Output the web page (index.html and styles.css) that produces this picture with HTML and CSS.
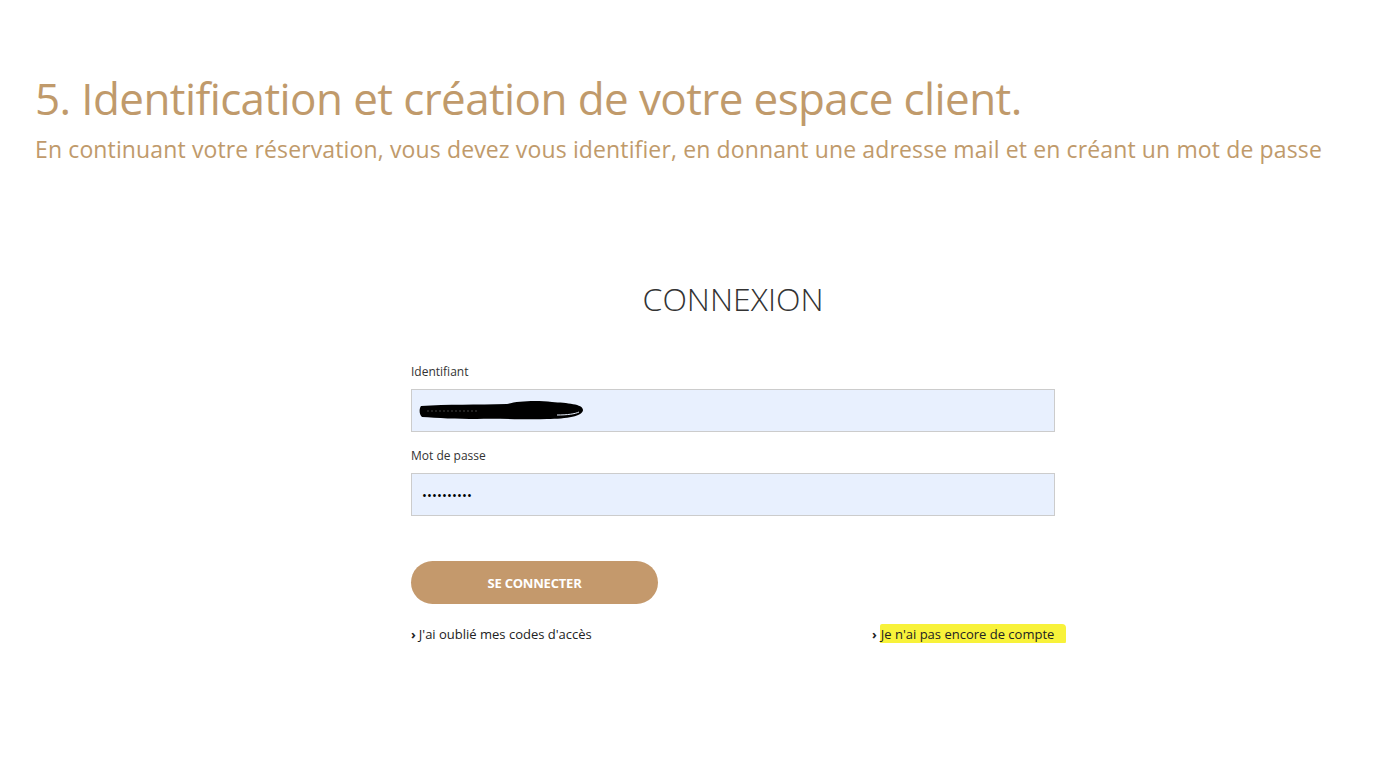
FILE: index.html
```html
<!DOCTYPE html>
<html lang="fr">

<head>
  <meta charset="UTF-8">
  <meta name="viewport" content="width=device-width, initial-scale=1.0">
  <title>Identification et création de votre espace client</title>
  <link rel="stylesheet" href="styles.css">
</head>

<body>
  <div class="intro">
    <h1>5. Identification et création de votre espace client.</h1>
    <p>En continuant votre réservation, vous devez vous identifier, en donnant une adresse mail et en créant un mot de passe</p>
  </div>

  <div class="login">
    <h2>CONNEXION</h2>

    <label for="identifiant">Identifiant</label>
    <div class="field">
      <input type="text" id="identifiant" value="" />
      <svg class="scribble" width="170" height="26" viewBox="0 0 170 26">
        <path d="M4 8 C30 6 60 7 90 6 C100 3 120 2 135 4 C150 5 166 6 166 12 C166 18 150 21 130 21 C110 22 80 20 60 21 C40 21 20 20 5 19 C2 16 2 11 4 8 Z" fill="#000" />
        <path d="M10 13 L60 13" stroke="#444" stroke-width="1" stroke-dasharray="2 2" />
        <path d="M140 17 C150 17 158 16 162 14" stroke="#e8f0fe" stroke-width="1" fill="none" />
      </svg>
    </div>

    <label for="motdepasse">Mot de passe</label>
    <div class="field">
      <input type="password" id="motdepasse" value="motdepasse" />
    </div>

    <button type="button">SE CONNECTER</button>

    <div class="liens">
      <a href="#" class="oubli"><span class="chevron">›</span>J'ai oublié mes codes d'accès</a>
      <a href="#"><span class="chevron">›</span><mark>Je n'ai pas encore de compte</mark></a>
    </div>
  </div>
</body>

</html>
```

FILE: styles.css
```css
body {
  margin: 0;
  background: #fff;
  font-family: 'Open Sans', sans-serif;
}

.intro {
  padding: 69px 0 0 35px;
  color: #c09a6b;
}

.intro h1 {
  margin: 0;
  font-size: 44px;
  font-weight: 400;
  letter-spacing: -0.6px;
  line-height: 58px;
}

.intro p {
  margin: 5px 0 0;
  font-size: 23px;
  letter-spacing: 0.13px;
  line-height: 34px;
}

.login {
  width: 644px;
  margin: 114px 0 0 411px;
}

.login h2 {
  margin: 0 0 45px;
  text-align: center;
  font-size: 32px;
  font-weight: 300;
  color: #333;
  line-height: 38px;
}

label {
  display: block;
  font-size: 12px;
  color: #333;
  line-height: 18px;
  margin-bottom: 8px;
}

.field {
  position: relative;
  margin-bottom: 15px;
}

input {
  display: block;
  box-sizing: border-box;
  width: 100%;
  height: 43px;
  padding: 0 10px;
  border: 1px solid #ccc;
  background: #e8f0fe;
  font-family: 'Open Sans', sans-serif;
  font-size: 13px;
  letter-spacing: 0.1px;
  color: #000;
  outline: none;
}

.scribble {
  position: absolute;
  left: 6px;
  top: 9px;
}

button {
  display: block;
  margin-top: 45px;
  width: 247px;
  height: 43px;
  border: none;
  border-radius: 22px;
  background: #c4996c;
  color: #fff;
  font-family: 'Open Sans', sans-serif;
  font-size: 13px;
  font-weight: 700;
  letter-spacing: -0.2px;
  cursor: pointer;
}

.liens {
  display: flex;
  margin-top: 21px;
  white-space: nowrap;
}

.liens a {
  flex: none;
  font-size: 13px;
  color: #222;
  text-decoration: none;
  line-height: 18px;
}

.liens a.oubli {
  width: 461px;
}

.chevron {
  font-weight: 700;
  margin-right: 3px;
}

mark {
  background: #f8f23a;
  color: #222;
  padding: 1px 12px 1px 1px;
  border-radius: 2px 4px 3px 2px;
}
```
